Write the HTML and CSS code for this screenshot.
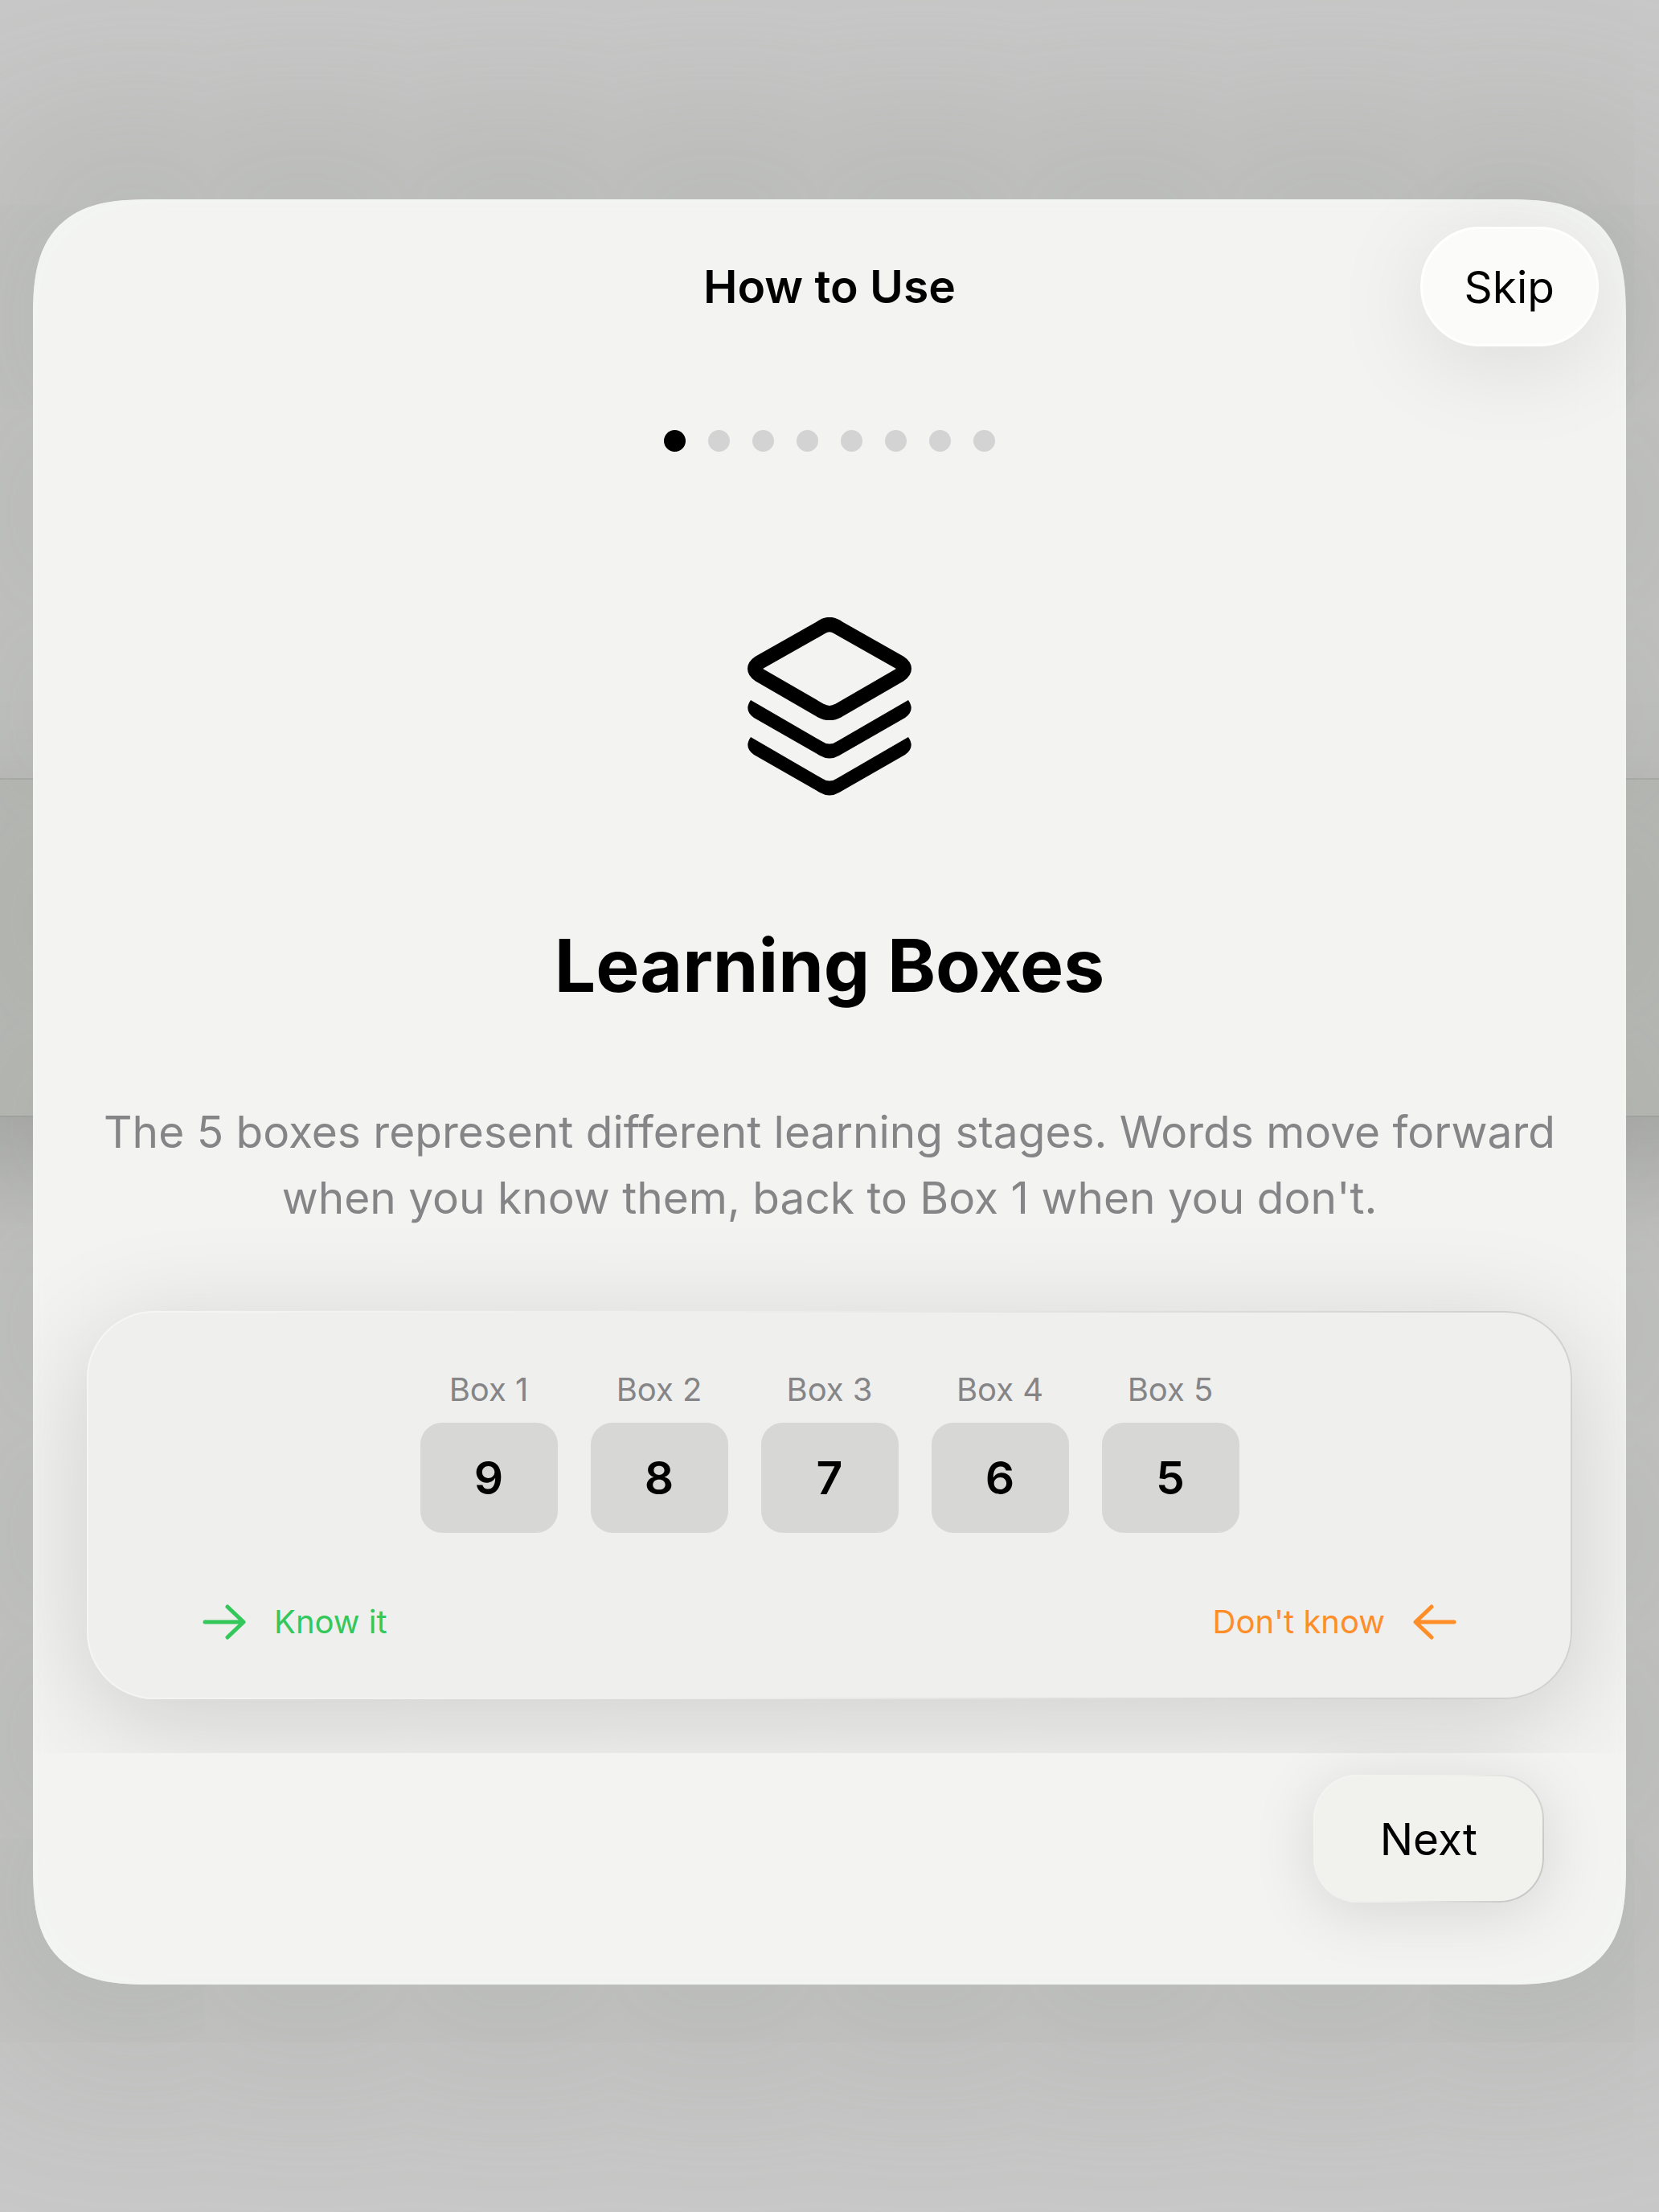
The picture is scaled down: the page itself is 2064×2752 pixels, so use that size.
FILE: index.html
```html
<!DOCTYPE html>
<html lang="en">
<head>
  <meta charset="UTF-8" />
  <title>How to Use</title>
  <meta name="viewport" content="width=device-width, initial-scale=1" />
  <link rel="stylesheet" href="styles.css">
</head>
<body>
  <div class="stage">
    <!-- Dimmed page behind the sheet -->
    <div class="backdrop">
      <div class="backdrop-card"></div>
    </div>

    <div class="sheet" role="dialog" aria-labelledby="sheet-title">
      <header class="sheet-header">
        <h1 class="sheet-title" id="sheet-title">How to Use</h1>
        <button class="skip-btn" type="button">Skip</button>
      </header>

      <main class="page">
        <div class="dots">
          <span class="dot active"></span>
          <span class="dot"></span>
          <span class="dot"></span>
          <span class="dot"></span>
          <span class="dot"></span>
          <span class="dot"></span>
          <span class="dot"></span>
          <span class="dot"></span>
        </div>

        <svg class="stack-icon" viewBox="0 0 206 222" aria-hidden="true">
          <path d="M92 13 Q103 5 114 13 L190 56 Q202 64 190 72 L114 116 Q103 122 92 116 L16 72 Q4 64 16 56 Z" />
          <path class="layer" d="M5 103 Q-4 116 9 125 L91 172 Q103 179 115 172 L197 125 Q210 116 201 103 L113 154 Q103 161 93 154 Z" />
          <path class="layer" d="M5 149 Q-4 162 9 171 L91 218 Q103 225 115 218 L197 171 Q210 162 201 149 L113 200 Q103 207 93 200 Z" />
        </svg>

        <h2 class="page-title">Learning Boxes</h2>
        <p class="page-text">The 5 boxes represent different learning stages. Words move forward when you know them, back to Box 1 when you don't.</p>

        <section class="demo-card">
          <div class="boxes">
            <div class="box"><span class="box-label">Box 1</span><span class="box-count">9</span></div>
            <div class="box"><span class="box-label">Box 2</span><span class="box-count">8</span></div>
            <div class="box"><span class="box-label">Box 3</span><span class="box-count">7</span></div>
            <div class="box"><span class="box-label">Box 4</span><span class="box-count">6</span></div>
            <div class="box"><span class="box-label">Box 5</span><span class="box-count">5</span></div>
          </div>
          <div class="legend">
            <div class="legend-item know">
              <svg class="arrow" viewBox="0 0 54 44" aria-hidden="true"><path d="M3 22H50M31 3L51 22L31 41" /></svg>
              <span>Know it</span>
            </div>
            <div class="legend-item dont-know">
              <span>Don't know</span>
              <svg class="arrow" viewBox="0 0 54 44" aria-hidden="true"><path d="M51 22H4M23 3L3 22L23 41" /></svg>
            </div>
          </div>
        </section>
      </main>

      <footer class="sheet-footer">
        <button class="next-btn" type="button">Next</button>
      </footer>
    </div>
  </div>
</body>
</html>
```
FILE: styles.css
```css
* {
  box-sizing: border-box;
}

body {
  margin: 0;
  background: #c9c9c9;
  font-family: Inter, 'Liberation Sans', sans-serif;
  color: #000;
}

h1, h2, p {
  margin: 0;
}

button {
  border: 0;
  font-family: inherit;
  font-size: 55px;
  color: inherit;
  cursor: pointer;
}

/* backdrop and sheet share one grid cell */
.stage {
  display: grid;
  min-height: 100vh;
  overflow: hidden;
}

.backdrop,
.sheet {
  grid-area: 1 / 1;
}

.backdrop {
  padding-top: 968px;
}

.backdrop-card {
  height: 422px;
  margin: 0 -200px;
  background: #bcbdba;
  border-top: 2px solid #adaeac;
  border-bottom: 2px solid #a4a6a3;
  box-shadow: 0 50px 150px rgba(0, 0, 0, 0.18);
}

.sheet {
  position: relative;
  align-self: start;
  margin: 248px 41px 0;
  background: #f3f3f1;
  border-radius: 120px;
  box-shadow: 0 0 240px 110px rgba(140, 147, 136, 0.3), inset 0 0 90px #f3f6f2;
}

@supports (corner-shape: superellipse(1.5)) {
  .sheet {
    border-radius: 150px;
    corner-shape: superellipse(1.5);
  }
}

.sheet-header {
  display: grid;
  grid-template-columns: 1fr auto 1fr;
  align-items: center;
  padding: 34px 34px 0;
}

.sheet-title {
  grid-column: 2;
  font-size: 57px;
  font-weight: 600;
  line-height: 68px;
}

.skip-btn {
  position: relative;
  justify-self: end;
  height: 149px;
  padding: 0 52px;
  background: #fbfcfa;
  border: 3px solid #fff;
  border-radius: 75px;
  box-shadow: 0 20px 120px rgba(0, 0, 0, 0.1);
}

.page {
  display: flex;
  flex-direction: column;
  align-items: center;
  padding: 104px 67px 67px;
  overflow: hidden;
}

.dots {
  display: flex;
  gap: 28px;
}

.dot {
  width: 27px;
  height: 27px;
  border-radius: 50%;
  background: #d3d3d3;
}

.dot.active {
  background: #000;
}

.stack-icon {
  width: 206px;
  height: 222px;
  margin-top: 206px;
  fill: none;
  stroke: #000;
  stroke-width: 18px;
  stroke-linejoin: round;
}

.stack-icon .layer {
  fill: #000;
  stroke: none;
}

.page-title {
  margin-top: 155px;
  font-size: 91px;
  font-weight: 700;
  line-height: 112px;
}

.page-text {
  margin-top: 110px;
  font-size: 55px;
  line-height: 82px;
  text-align: center;
  color: #858587;
}

.demo-card {
  align-self: stretch;
  height: 483px;
  margin-top: 100px;
  padding: 72px 142px 0;
  background:
    linear-gradient(#efefee, #efefee) padding-box,
    linear-gradient(100deg, #f6f6f6, #ededec 45%, #d0d1d0 90%) border-box;
  border: 2px solid transparent;
  border-radius: 84px;
  box-shadow: 0 28px 140px rgba(0, 0, 0, 0.16);
}

.boxes {
  display: flex;
  justify-content: center;
  gap: 41px;
}

.box {
  display: flex;
  flex-direction: column;
  align-items: center;
  gap: 17px;
}

.box-label {
  font-size: 40px;
  line-height: 48px;
  color: #858587;
}

.box-count {
  width: 171px;
  height: 137px;
  border-radius: 27px;
  background: #d7d7d5;
  font-size: 57px;
  font-weight: 600;
  line-height: 137px;
  text-align: center;
}

.legend {
  display: flex;
  justify-content: space-between;
  margin-top: 87px;
}

.legend-item {
  display: flex;
  align-items: center;
  gap: 35px;
  font-size: 40px;
  line-height: 48px;
}

.know {
  color: #34c759;
}

.dont-know {
  color: #ff8d28;
}

.arrow {
  width: 54px;
  height: 44px;
  fill: none;
  stroke: currentColor;
  stroke-width: 5px;
  stroke-linecap: round;
  stroke-linejoin: round;
}

.sheet-footer {
  display: flex;
  justify-content: flex-end;
  padding: 27px 102px 102px;
}

.next-btn {
  height: 159px;
  padding: 0 81px;
  background:
    linear-gradient(#f1f1ee, #f1f1ee) padding-box,
    linear-gradient(120deg, #f4f4f3, #eeeeec 50%, #c8c8c7 90%) border-box;
  border: 2px solid transparent;
  border-radius: 55px;
  box-shadow: 0 12px 80px rgba(0, 0, 0, 0.12);
}
```
